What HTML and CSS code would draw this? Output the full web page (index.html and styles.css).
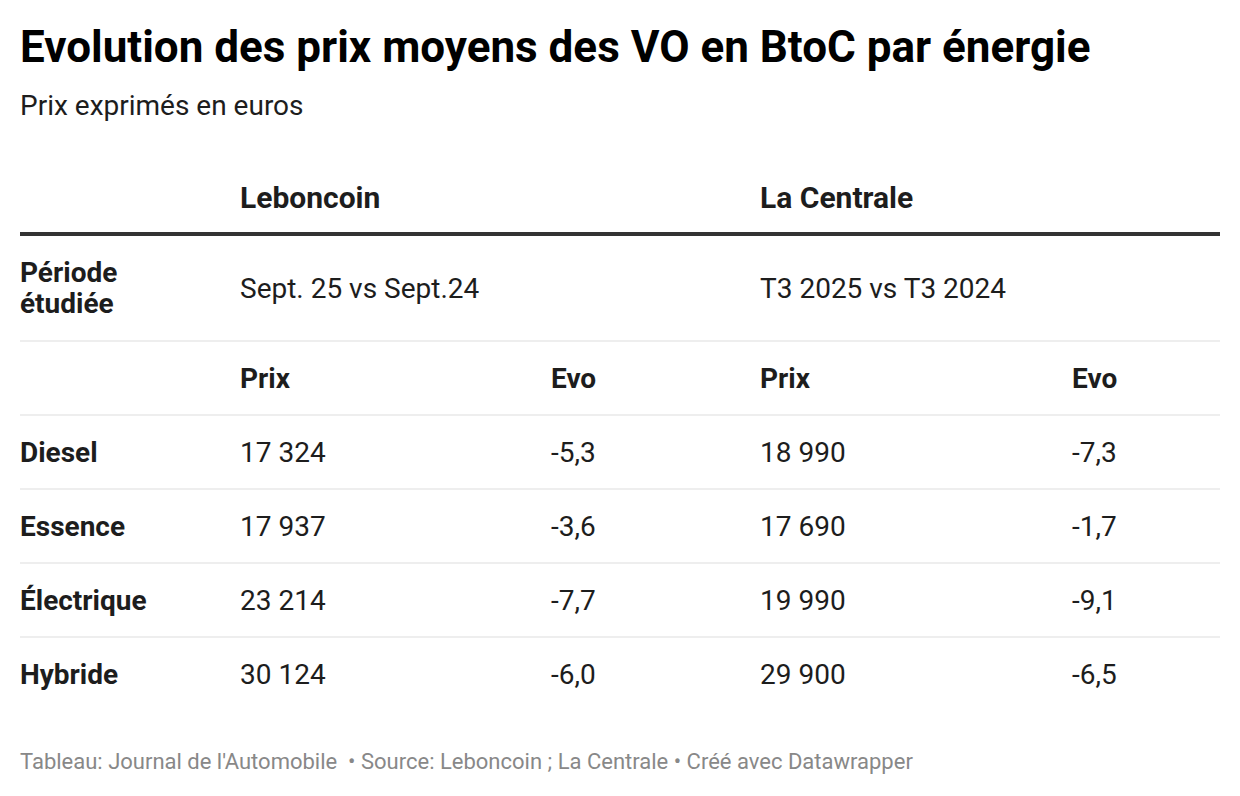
FILE: index.html
```html
<!DOCTYPE html>
<html lang="fr">
<head>
<meta charset="utf-8">
<link rel="stylesheet" href="styles.css">
</head>
<body>
<div class="chart">
  <h1 class="title">Evolution des prix moyens des VO en BtoC par énergie</h1>
  <p class="subtitle">Prix exprimés en euros</p>
  <table class="tbl">
    <colgroup>
      <col class="c1"><col class="c2"><col class="c3"><col class="c4"><col class="c5">
    </colgroup>
    <thead>
      <tr class="head">
        <th></th>
        <th colspan="2">Leboncoin</th>
        <th colspan="2">La Centrale</th>
      </tr>
    </thead>
    <tbody>
      <tr class="period">
        <th>Période<br>étudiée</th>
        <td colspan="2">Sept. 25 vs Sept.24</td>
        <td colspan="2">T3 2025 vs T3 2024</td>
      </tr>
      <tr class="sub">
        <th></th>
        <th>Prix</th><th>Evo</th><th>Prix</th><th>Evo</th>
      </tr>
      <tr><th>Diesel</th><td>17 324</td><td>-5,3</td><td>18 990</td><td>-7,3</td></tr>
      <tr><th>Essence</th><td>17 937</td><td>-3,6</td><td>17 690</td><td>-1,7</td></tr>
      <tr><th>Électrique</th><td>23 214</td><td>-7,7</td><td>19 990</td><td>-9,1</td></tr>
      <tr class="last"><th>Hybride</th><td>30 124</td><td>-6,0</td><td>29 900</td><td>-6,5</td></tr>
    </tbody>
  </table>
  <p class="footer">Tableau: Journal de l'Automobile &nbsp;• Source: Leboncoin ; La Centrale • Créé avec Datawrapper</p>
</div>
</body>
</html>
```
FILE: styles.css
```css
html, body {
  margin: 0;
  padding: 0;
  background: #ffffff;
}
body {
  font-family: Roboto, "Liberation Sans", sans-serif;
  color: #1d1d1d;
}
.chart {
  padding: 20px 20px 0 20px;
  width: 1200px;
}
.title {
  margin: 0;
  font-size: 44px;
  line-height: 54px;
  font-weight: 700;
  color: #000;
}
.subtitle {
  margin: 17px 0 0 0;
  font-size: 28px;
  line-height: 30px;
  color: #1d1d1d;
}
.tbl {
  margin-top: 41px;
  width: 1200px;
  border-collapse: collapse;
  table-layout: fixed;
  font-size: 28px;
}
.c1 { width: 220px; }
.c2 { width: 311px; }
.c3 { width: 209px; }
.c4 { width: 312px; }
.c5 { width: 148px; }
.tbl th, .tbl td {
  padding: 0;
  text-align: left;
  vertical-align: middle;
  line-height: 31px;
}
.tbl th { font-weight: 700; }
.tbl td { font-weight: 400; }
.head th {
  height: 70px;
  border-bottom: 4px solid #333333;
  font-size: 30px;
}
.period th, .period td {
  height: 104px;
  border-bottom: 2px solid #eeeeee;
}
.tbl tbody tr:not(.period) th,
.tbl tbody tr:not(.period) td {
  height: 72px;
  border-bottom: 2px solid #eeeeee;
}
.tbl tbody tr.last th, .tbl tbody tr.last td {
  border-bottom: none;
}
.footer {
  margin: 39px 0 0 0;
  font-size: 22px;
  line-height: 26px;
  color: #888888;
}
```
